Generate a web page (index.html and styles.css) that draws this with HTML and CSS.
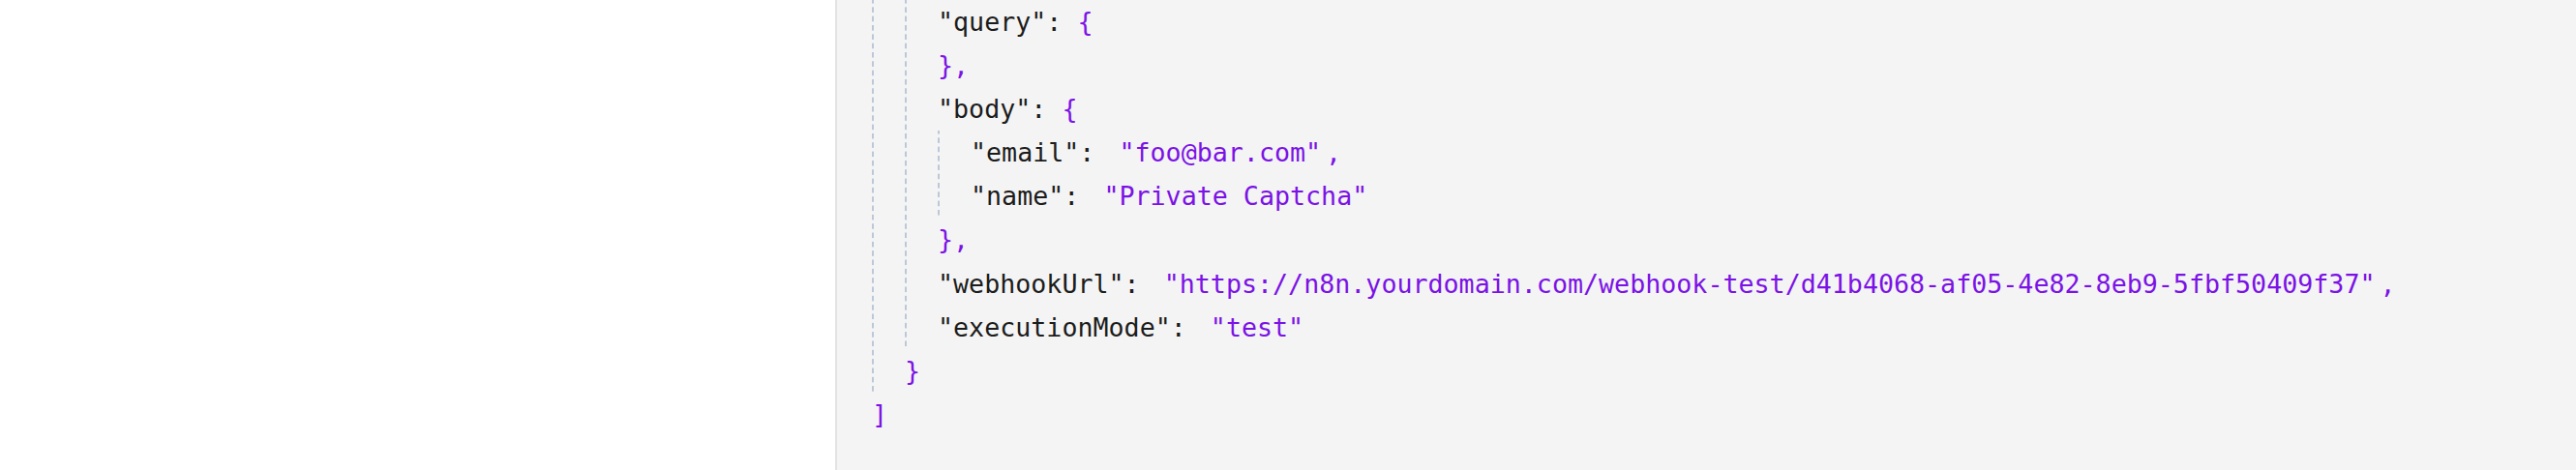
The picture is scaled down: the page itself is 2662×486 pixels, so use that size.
FILE: index.html
```html
<!DOCTYPE html>
<html>
<head>
<meta charset="utf-8">
<link rel="stylesheet" href="styles.css">
</head>
<body>
<div class="page">
  <div class="side"></div>
  <div class="panel">
    <div class="code">
      <div class="kids">
        <div class="kids">
          <div class="row"><span class="key">"query"</span>: <span class="p">{</span></div>
          <div class="row"><span class="p">},</span></div>
          <div class="row"><span class="key">"body"</span>: <span class="p">{</span></div>
          <div class="kids">
            <div class="row"><span class="key">"email"</span>: <span class="str">"foo@bar.com"</span><span class="p">,</span></div>
            <div class="row"><span class="key">"name"</span>: <span class="str">"Private Captcha"</span></div>
          </div>
          <div class="row"><span class="p">},</span></div>
          <div class="row"><span class="key">"webhookUrl"</span>: <span class="str">"https://n8n.yourdomain.com/webhook-test/d41b4068-af05-4e82-8eb9-5fbf50409f37"</span><span class="p">,</span></div>
          <div class="row"><span class="key">"executionMode"</span>: <span class="str">"test"</span></div>
        </div>
        <div class="row"><span class="p">}</span></div>
      </div>
      <div class="row"><span class="p">]</span></div>
    </div>
  </div>
</div>
</body>
</html>
```

FILE: styles.css
```css
html, body {
  margin: 0;
  padding: 0;
  background: #ffffff;
}
.page {
  display: flex;
  width: 2662px;
  height: 486px;
  overflow: hidden;
}
.side {
  width: 863px;
  flex: none;
  background: #ffffff;
}
.panel {
  flex: 1;
  background: #f4f4f4;
  border-left: 2px solid #e3e3e3;
  padding-left: 36px;
  overflow: hidden;
}
.code {
  margin-top: 0;
  font-family: "DejaVu Sans Mono", monospace;
  font-size: 26.67px;
  line-height: 45px;
  color: #1c1c1c;
}
.kids {
  padding-left: 34px;
  background-image: linear-gradient(to bottom, #bcc8d8 5.33px, transparent 5.33px);
  background-size: 2px 9.333px;
  background-repeat: repeat-y;
  background-position: 0 -2px;
}
.row {
  height: 45.1px;
  white-space: pre;
}
.key {
  color: #1c1c1c;
}
.p {
  color: #7b12e6;
}
.str {
  color: #7b12e6;
  margin-left: 9px;
  margin-right: 5px;
}
```
